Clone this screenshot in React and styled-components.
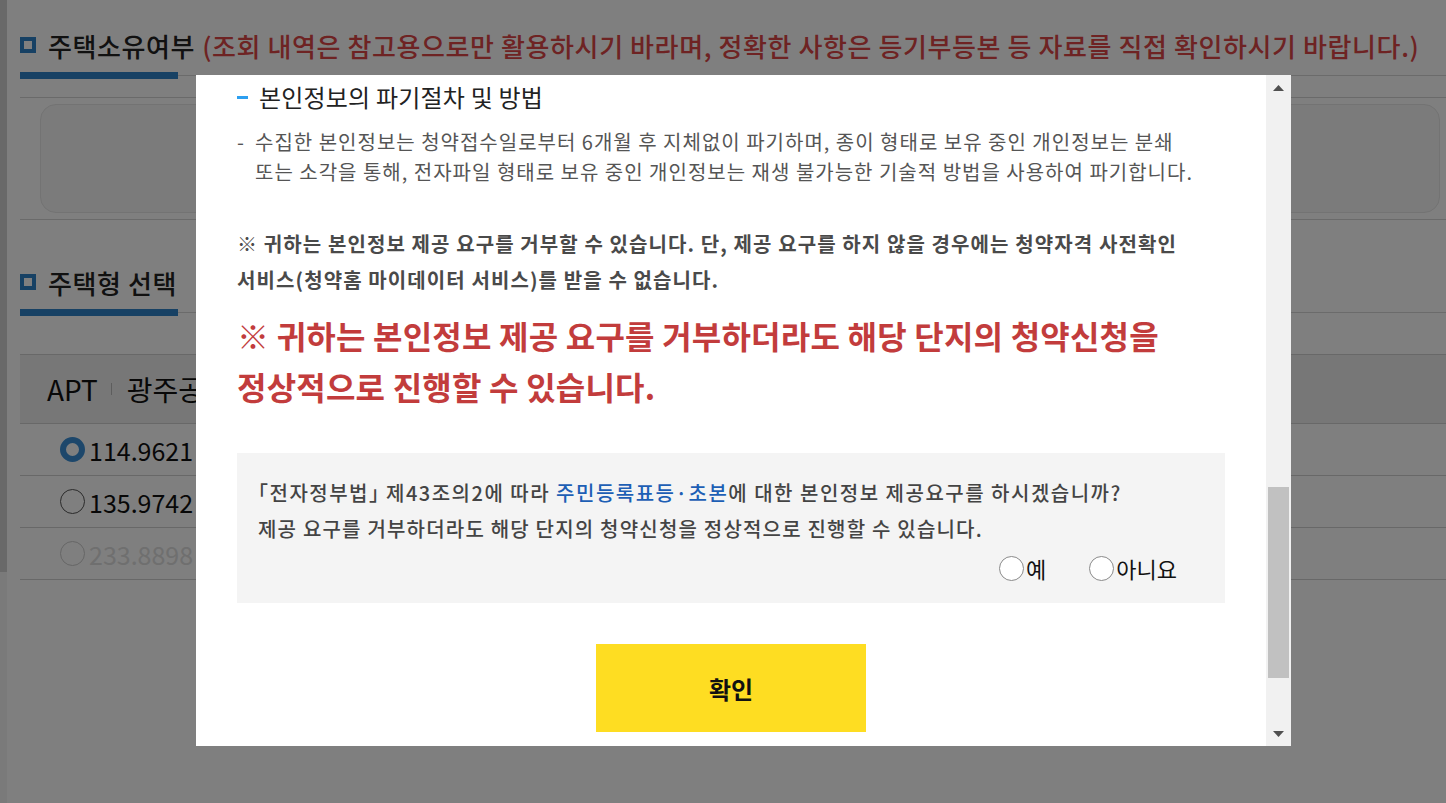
import React from 'react'
import styled, { createGlobalStyle } from 'styled-components'

const GlobalStyle = createGlobalStyle`
  html, body {
    margin: 0;
    padding: 0;
    background: #fff;
    overflow: hidden;
  }
  body {
    font-family: "Noto Sans CJK KR", "Noto Sans", sans-serif;
    color: #222;
  }
  * { box-sizing: border-box; }
`

const App = () => {
  return (
    <>
      <GlobalStyle />
      <Page>
        <SideStrip />
        <Main>
          <SectionHead>
            <HeadIcon />
            <HeadTitle>주택소유여부</HeadTitle>
            <HeadNote>(조회 내역은 참고용으로만 활용하시기 바라며, 정확한 사항은 등기부등본 등 자료를 직접 확인하시기 바랍니다.)</HeadNote>
          </SectionHead>
          <Underline>
            <UnderBar />
            <UnderRule />
          </Underline>
          <SummaryWrap>
            <SummaryBox />
          </SummaryWrap>

          <SectionHead $top={45}>
            <HeadIcon />
            <HeadTitle>주택형 선택</HeadTitle>
          </SectionHead>
          <Underline>
            <UnderBar />
            <UnderRule />
          </Underline>

          <Table>
            <TableHead>
              APT<HeadSep />광주공원
            </TableHead>
            <Row>
              <BgRadio $checked />
              <RowText>114.9621</RowText>
            </Row>
            <Row>
              <BgRadio />
              <RowText>135.9742</RowText>
            </Row>
            <Row>
              <BgRadio $disabled />
              <RowText $disabled>233.8898</RowText>
            </Row>
          </Table>
        </Main>
      </Page>

      <Overlay>
        <Modal>
          <ModalBody>
            <SubTitle>
              <SubDash />
              본인정보의 파기절차 및 방법
            </SubTitle>
            <DashText>
              <span>-</span>
              <p>
                수집한 본인정보는 청약접수일로부터 6개월 후 지체없이 파기하며, 종이 형태로 보유 중인 개인정보는 분쇄<br />
                또는 소각을 통해, 전자파일 형태로 보유 중인 개인정보는 재생 불가능한 기술적 방법을 사용하여 파기합니다.
              </p>
            </DashText>

            <Notice>
              ※ 귀하는 본인정보 제공 요구를 거부할 수 있습니다. 단, 제공 요구를 하지 않을 경우에는 청약자격 사전확인<br />
              서비스(청약홈 마이데이터 서비스)를 받을 수 없습니다.
            </Notice>

            <Warning>
              ※ 귀하는 본인정보 제공 요구를 거부하더라도 해당 단지의 청약신청을<br />
              정상적으로 진행할 수 있습니다.
            </Warning>

            <AgreeBox>
              <AgreeText $wide>
                <OpenQuote>「</OpenQuote>전자정부법<CloseQuote>」</CloseQuote> 제43조의2에 따라 <Blue>주민등록표등·초본</Blue>에 대한 본인정보 제공요구를 하시겠습니까?
              </AgreeText>
              <AgreeText>
                제공 요구를 거부하더라도 해당 단지의 청약신청을 정상적으로 진행할 수 있습니다.
              </AgreeText>
              <ChoiceRow>
                <Choice>
                  <ChoiceDot />예
                </Choice>
                <Choice>
                  <ChoiceDot />아니요
                </Choice>
              </ChoiceRow>
            </AgreeBox>

            <ButtonRow>
              <ConfirmButton>확인</ConfirmButton>
            </ButtonRow>
          </ModalBody>

          <ScrollBar>
            <ArrowBtn>
              <svg width="11" height="6" viewBox="0 0 11 6"><path d="M0 6 L5.5 0 L11 6 Z" fill="#505050" /></svg>
            </ArrowBtn>
            <Track>
              <Thumb style={{ marginTop: 387, height: 191 }} />
            </Track>
            <ArrowBtn>
              <svg width="11" height="6" viewBox="0 0 11 6"><path d="M0 0 L11 0 L5.5 6 Z" fill="#505050" /></svg>
            </ArrowBtn>
          </ScrollBar>
        </Modal>
      </Overlay>
    </>
  )
}

export default App

/* ---------- background page ---------- */

const Page = styled.div`
  display: flex;
  height: 100vh;
  background: #fff;
`

const SideStrip = styled.div`
  width: 7px;
  flex-shrink: 0;
  background: linear-gradient(to bottom, #d2d2d2 0, #d2d2d2 572px, #f4f4f4 572px);
`

const Main = styled.div`
  flex: 1;
  padding-left: 13px;
  overflow: hidden;
`

const SectionHead = styled.div`
  display: flex;
  align-items: center;
  height: 34px;
  margin-top: ${p => (p.$top != null ? p.$top : 28)}px;
  white-space: nowrap;
`

const HeadIcon = styled.span`
  width: 16px;
  height: 16px;
  border: 4px solid #2f82c8;
  background: #fff;
  margin-right: 12px;
  flex-shrink: 0;
`

const HeadTitle = styled.h2`
  margin: 0;
  font-size: 26px;
  font-weight: 500;
  color: #222;
  letter-spacing: 0.6px;
`

const HeadNote = styled.span`
  margin-left: 7px;
  font-size: 26px;
  font-weight: 500;
  color: #dc4646;
  letter-spacing: 0.6px;
`

const Underline = styled.div`
  display: flex;
  align-items: center;
  margin-top: 10px;
`

const UnderBar = styled.div`
  width: 158px;
  height: 7px;
  background: #2f82c8;
`

const UnderRule = styled.div`
  flex: 1;
  height: 1px;
  background: #d6d6d6;
`

const SummaryWrap = styled.div`
  margin-top: 18px;
  padding: 6px 6px 6px 20px;
  border-top: 1px solid #d4d4d4;
  border-bottom: 1px solid #d4d4d4;
`

const SummaryBox = styled.div`
  height: 109px;
  border: 1px solid #e6e6e6;
  border-radius: 16px;
  background: #f6f6f6;
`

const Table = styled.div`
  margin-top: 38px;
  border-top: 1px solid #d0d0d0;
`

const TableHead = styled.div`
  display: flex;
  align-items: center;
  height: 69px;
  padding-left: 27px;
  background: #eeeeee;
  border-bottom: 1px solid #d0d0d0;
  font-size: 28px;
  color: #111;
  white-space: nowrap;
`

const HeadSep = styled.span`
  display: inline-block;
  width: 1px;
  height: 12px;
  background: #bbb;
  margin: 0 15px 0 13px;
`

const Row = styled.div`
  display: flex;
  align-items: center;
  height: 52px;
  padding-left: 40px;
  border-bottom: 1px solid #d0d0d0;
`

const BgRadio = styled.span`
  width: 25px;
  height: 25px;
  border-radius: 50%;
  flex-shrink: 0;
  background: #fff;
  border: ${p => (p.$checked ? '6px solid #3a8fd6' : p.$disabled ? '1px solid #ccc' : '1px solid #555')};
  margin-right: 4px;
`

const RowText = styled.span`
  font-size: 25px;
  color: ${p => (p.$disabled ? '#dedede' : '#111')};
`

/* ---------- modal ---------- */

const Overlay = styled.div`
  position: fixed;
  inset: 0;
  background: rgba(0, 0, 0, 0.5);
  padding: 75px 0 0 196px;
`

const Modal = styled.div`
  display: flex;
  width: 1095px;
  height: 671px;
  background: #fff;
`

const ModalBody = styled.div`
  flex: 1;
  overflow: hidden;
  padding: 7px 41px 0 41px;
`

const SubTitle = styled.h3`
  display: flex;
  align-items: center;
  margin: 0;
  font-size: 24px;
  line-height: 30px;
  font-weight: 400;
  color: #222;
  letter-spacing: 0.2px;
`

const SubDash = styled.span`
  width: 11px;
  height: 3px;
  background: #2c9ff0;
  margin-right: 11px;
`

const DashText = styled.div`
  display: flex;
  margin-top: 15px;
  font-size: 20px;
  line-height: 30px;
  color: #555;
  letter-spacing: 1px;

  span {
    width: 18px;
    flex-shrink: 0;
  }
  p {
    margin: 0;
    white-space: nowrap;
  }
`

const Notice = styled.p`
  margin: 39px 0 0;
  font-size: 20px;
  line-height: 36px;
  font-weight: 700;
  color: #4a4a4a;
  letter-spacing: 1.1px;
  white-space: nowrap;
`

const Warning = styled.p`
  margin: 12px 0 0;
  font-size: 32px;
  line-height: 51px;
  font-weight: 700;
  color: #c23c3c;
  letter-spacing: 0.2px;
  white-space: nowrap;
`

const AgreeBox = styled.div`
  margin-top: 41px;
  padding: 22px 48px 17px 21px;
  background: #f4f4f4;
`

const AgreeText = styled.p`
  margin: 0;
  font-size: 20px;
  line-height: 36px;
  font-weight: 500;
  color: #444;
  letter-spacing: ${p => (p.$wide ? '1.5px' : '1.2px')};
  white-space: nowrap;
`

const OpenQuote = styled.span`
  margin-left: -10px;
`

const CloseQuote = styled.span`
  letter-spacing: -9px;
`

const Blue = styled.span`
  color: #1d5fb5;
`

const ChoiceRow = styled.div`
  display: flex;
  justify-content: flex-end;
  gap: 43px;
  height: 36px;
  margin-top: 3px;
  align-items: center;
`

const Choice = styled.label`
  display: flex;
  align-items: center;
  font-size: 22px;
  color: #111;
`

const ChoiceDot = styled.span`
  width: 25px;
  height: 25px;
  border-radius: 50%;
  border: 1px solid #8a8a8a;
  background: #fff;
  margin-right: 2px;
`

const ButtonRow = styled.div`
  display: flex;
  justify-content: center;
  margin-top: 41px;
`

const ConfirmButton = styled.button`
  width: 270px;
  height: 88px;
  border: 0;
  background: #fedd22;
  font-family: inherit;
  font-size: 24px;
  font-weight: 700;
  color: #111;
  cursor: pointer;
`

const ScrollBar = styled.div`
  display: flex;
  flex-direction: column;
  width: 25px;
  background: #f1f1f1;
`

const ArrowBtn = styled.div`
  height: 25px;
  display: flex;
  align-items: center;
  justify-content: center;
`

const Track = styled.div`
  flex: 1;
  padding: 0 2px;
`

const Thumb = styled.div`
  background: #c1c1c1;
`
